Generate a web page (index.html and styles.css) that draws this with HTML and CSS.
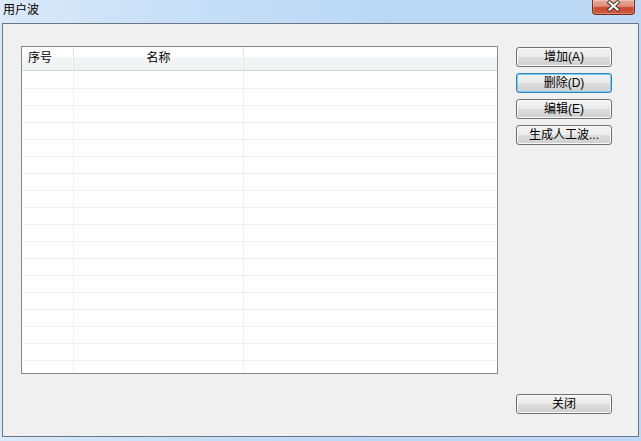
FILE: index.html
```html
<!DOCTYPE html>
<html lang="zh-CN">
<head>
    <meta charset="UTF-8">
    <title>用户波</title>
    <link rel="stylesheet" href="styles.css">
</head>
<body>
    <div class="window">
        <div class="titlebar">
            <span class="title">用户波</span>
            <div class="close-btn">
                <svg width="43" height="15" viewBox="0 0 43 15">
                    <path d="M17.5 3.5 L25.5 10.5 M25.5 3.5 L17.5 10.5" stroke="#4a3a36" stroke-width="4" stroke-linecap="square"/>
                    <path d="M17.5 3.5 L25.5 10.5 M25.5 3.5 L17.5 10.5" stroke="#ffffff" stroke-width="2" stroke-linecap="square"/>
                </svg>
            </div>
        </div>

        <div class="client">
            <div class="listview">
                <div class="lv-header">
                    <div class="hcell first">序号</div>
                    <div class="hcell center">名称</div>
                    <div class="hcell last"></div>
                </div>
                <div class="lv-body">
                    <div class="row"><div class="cell"></div><div class="cell"></div><div class="cell"></div></div>
                    <div class="row"><div class="cell"></div><div class="cell"></div><div class="cell"></div></div>
                    <div class="row"><div class="cell"></div><div class="cell"></div><div class="cell"></div></div>
                    <div class="row"><div class="cell"></div><div class="cell"></div><div class="cell"></div></div>
                    <div class="row"><div class="cell"></div><div class="cell"></div><div class="cell"></div></div>
                    <div class="row"><div class="cell"></div><div class="cell"></div><div class="cell"></div></div>
                    <div class="row"><div class="cell"></div><div class="cell"></div><div class="cell"></div></div>
                    <div class="row"><div class="cell"></div><div class="cell"></div><div class="cell"></div></div>
                    <div class="row"><div class="cell"></div><div class="cell"></div><div class="cell"></div></div>
                    <div class="row"><div class="cell"></div><div class="cell"></div><div class="cell"></div></div>
                    <div class="row"><div class="cell"></div><div class="cell"></div><div class="cell"></div></div>
                    <div class="row"><div class="cell"></div><div class="cell"></div><div class="cell"></div></div>
                    <div class="row"><div class="cell"></div><div class="cell"></div><div class="cell"></div></div>
                    <div class="row"><div class="cell"></div><div class="cell"></div><div class="cell"></div></div>
                    <div class="row"><div class="cell"></div><div class="cell"></div><div class="cell"></div></div>
                    <div class="row"><div class="cell"></div><div class="cell"></div><div class="cell"></div></div>
                    <div class="row"><div class="cell"></div><div class="cell"></div><div class="cell"></div></div>
                    <div class="row"><div class="cell"></div><div class="cell"></div><div class="cell"></div></div>
                </div>
            </div>

            <div class="side">
                <div class="btn-group">
                    <button class="btn">增加(A)</button>
                    <button class="btn focused">删除(D)</button>
                    <button class="btn">编辑(E)</button>
                    <button class="btn">生成人工波...</button>
                </div>
                <button class="btn">关闭</button>
            </div>
        </div>
    </div>
</body>
</html>
```

FILE: styles.css
```css
/* Global */
body, html {
    margin: 0;
    padding: 0;
    background: #bcd7f3;
    font-family: "Liberation Sans", "Noto Sans CJK SC", sans-serif;
    font-size: 12px;
    color: #000;
}

/* Window frame */
.window {
    width: 641px;
    height: 441px;
    display: flex;
    flex-direction: column;
    background: linear-gradient(to right, #dbe9f8 0%, #c9e0f7 25%, #bad8f6 60%, #bcd8f5 100%);
}

.titlebar {
    height: 23px;
    display: flex;
    justify-content: space-between;
    align-items: flex-start;
    flex-shrink: 0;
}

.title {
    padding-left: 3px;
    line-height: 21px;
    color: #000;
}

.close-btn {
    width: 43px;
    height: 15px;
    margin-right: 6px;
    box-sizing: border-box;
    border: 1px solid #7b2b1d;
    border-top: none;
    border-radius: 0 0 4px 4px;
    background: linear-gradient(#e9ab9b 0%, #dd8b76 45%, #c8472d 55%, #cf5d3f 100%);
    box-shadow: inset 0 0 0 1px rgba(255, 255, 255, 0.25);
    overflow: hidden;
}

.close-btn svg {
    display: block;
    margin: -1px 0 0 -1px;
}

/* Client area */
.client {
    flex: 1;
    margin: 0 2px 4px 2px;
    border: 1px solid #6b7785;
    background: #f0f0f0;
    display: flex;
    padding: 22px 0 22px 18px;
}

/* List view */
.listview {
    width: 477px;
    height: 328px;
    box-sizing: border-box;
    border: 1px solid #828790;
    background: #fff;
    overflow: hidden;
    flex-shrink: 0;
}

.lv-header {
    display: grid;
    grid-template-columns: 52px 170px 1fr;
    height: 23px;
    border-bottom: 1px solid #d5d5d5;
    background: linear-gradient(#ffffff 0%, #ffffff 42%, #f4f5f7 42%, #eff1f3 100%);
}

.hcell {
    line-height: 23px;
    border-right: 1px solid #e2e4e7;
    box-shadow: inset -1px 0 0 #fbfbfb;
}

.hcell.first {
    padding-left: 6px;
}

.hcell.center {
    text-align: center;
}

.hcell.last {
    border-right: none;
    box-shadow: none;
}

.lv-body {
    padding-top: 1px;
}

.row {
    display: grid;
    grid-template-columns: 52px 170px 1fr;
    height: 17px;
    box-sizing: border-box;
    border-bottom: 1px solid #efefef;
}

.cell {
    border-right: 1px solid #efefef;
}

.cell:last-child {
    border-right: none;
}

/* Buttons */
.side {
    margin-left: 18px;
    padding-top: 1px;
    display: flex;
    flex-direction: column;
    justify-content: space-between;
}

.btn-group {
    display: flex;
    flex-direction: column;
    gap: 6px;
}

.btn {
    width: 96px;
    height: 20px;
    padding: 0;
    font-family: "Liberation Sans", "Noto Sans CJK SC", sans-serif;
    font-size: 12px;
    line-height: 18px;
    color: #000;
    border: 1px solid #707070;
    border-radius: 3px;
    background: linear-gradient(#f2f2f2 0%, #ebebeb 48%, #dddddd 52%, #cfcfcf 100%);
    box-shadow: inset 0 0 0 1px #fafafa;
}

.btn.focused {
    border-color: #3c7fb1;
    box-shadow: inset 0 0 0 1px #6fd2f7;
}
```
